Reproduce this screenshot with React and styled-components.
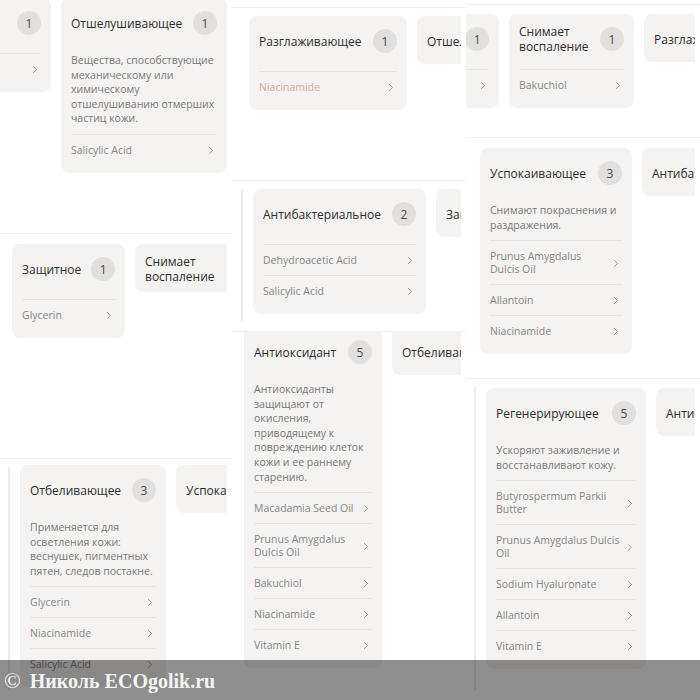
import React from "react";
import styled, { createGlobalStyle } from "styled-components";

const Global = createGlobalStyle`
  html, body { margin: 0; padding: 0; background: #fff; }
  body { font-family: "Open Sans", "Noto Sans", sans-serif; }
`;

const Page = styled.div`
  position: relative;
  width: 700px;
  height: 700px;
  overflow: hidden;
  display: flex;
  background: #fff;
`;

const Column = styled.div`
  flex: none;
  width: ${(p) => p.$w}px;
  padding-top: ${(p) => p.$top || 0}px;
  box-sizing: border-box;
  display: flex;
  flex-direction: column;
`;

const Tile = styled.div`
  flex: none;
  height: ${(p) => p.$h}px;
  box-sizing: border-box;
  border-top: ${(p) => (p.$line ? "1px solid #efefef" : "none")};
  display: flex;
  overflow: hidden;
`;

const Viewport = styled.div`
  flex: 1;
  margin-right: 5px;
  overflow: hidden;
  display: flex;
  align-items: flex-start;
`;

const Rail = styled.div`
  flex: none;
  align-self: stretch;
  width: 2px;
  margin: 8px 0 10px ${(p) => p.$ml}px;
  background: #ebebeb;
`;

const Row = styled.div`
  flex: none;
  width: max-content;
  display: flex;
  align-items: flex-start;
  gap: 10px;
  margin-top: ${(p) => p.$dy}px;
  margin-left: ${(p) => p.$dx}px;
`;

const Card = styled.div`
  flex: none;
  width: ${(p) => (p.$w ? `${p.$w}px` : "auto")};
  box-sizing: border-box;
  background: #f4f3f1;
  border-radius: 8px;
  padding: 0 10px ${(p) => (p.$open ? 8 : 11)}px;
`;

const Header = styled.div`
  display: flex;
  align-items: center;
  gap: ${(p) => (p.$open ? 10 : 18)}px;
  padding-top: 13px;
  height: 24px;
`;

const Title = styled.div`
  font-size: 12px;
  line-height: 15px;
  font-weight: 500;
  color: #2c2c2c;
  white-space: pre;
`;

const Badge = styled.div`
  flex: none;
  margin-left: auto;
  width: 24px;
  height: 24px;
  border-radius: 50%;
  background: #e1e0de;
  color: #4a4a4a;
  font-size: 12px;
  display: flex;
  align-items: center;
  justify-content: center;
`;

const Body = styled.div`
  padding-top: 18px;
`;

const Desc = styled.div`
  font-size: 10.5px;
  line-height: 14.6px;
  color: #787878;
  white-space: pre;
  padding-bottom: 8px;
`;

const Item = styled.div`
  display: flex;
  align-items: center;
  justify-content: space-between;
  gap: 8px;
  border-top: 1px solid #e5e4e2;
  padding: 9px 3px 8px 0;
`;

const ItemName = styled.div`
  font-size: 10.5px;
  line-height: 13px;
  color: ${(p) => (p.$accent ? "#e6a592" : "#868686")};
  white-space: pre;
`;

const Watermark = styled.div`
  position: absolute;
  left: 0;
  right: 0;
  bottom: 0;
  height: 40px;
  background: rgba(0, 0, 0, 0.44);
  display: flex;
  align-items: center;
  gap: 9px;
  padding: 2px 0 0 4px;
  box-sizing: border-box;
  font-family: "Liberation Serif", "DejaVu Serif", serif;
  font-weight: bold;
  font-size: 20px;
  color: #f4f4f4;
  white-space: pre;
`;

const Copy = styled.span`
  font-weight: normal;
  font-size: 22px;
`;

const Chevron = () => (
  <svg width="6" height="9" viewBox="0 0 6 9">
    <path d="M1.2 1.2 L4.6 4.5 L1.2 7.8" fill="none" stroke="#9c9c9c" strokeWidth="1" />
  </svg>
);

const CardView = ({ c }) => (
  <Card $w={c.w} $open={c.open}>
    <Header $open={c.open}>
      <Title>{c.title}</Title>
      <Badge>{c.n}</Badge>
    </Header>
    {c.open && (
      <Body>
        {c.desc && <Desc>{c.desc}</Desc>}
        {c.items.map((it, i) => (
          <Item key={i}>
            <ItemName $accent={c.accent === i}>{it}</ItemName>
            <Chevron />
          </Item>
        ))}
      </Body>
    )}
  </Card>
);

const C = {
  razg: { title: "Разглаживающее", n: 1, w: 158, items: ["Niacinamide"] },
  otsh: {
    title: "Отшелушивающее",
    n: 1,
    w: 166,
    desc: "Вещества, способствующие\nмеханическому или\nхимическому\nотшелушиванию отмерших\nчастиц кожи.",
    items: ["Salicylic Acid"],
  },
  zasch: { title: "Защитное", n: 1, w: 113, items: ["Glycerin"] },
  snim: { title: "Снимает\nвоспаление", n: 1, w: 125, items: ["Bakuchiol"] },
  otbel: {
    title: "Отбеливающее",
    n: 3,
    w: 146,
    desc: "Применяется для\nосветления кожи:\nвеснушек, пигментных\nпятен, следов постакне.",
    items: ["Glycerin", "Niacinamide", "Salicylic Acid"],
  },
  uspok: {
    title: "Успокаивающее",
    n: 3,
    w: 152,
    desc: "Снимают покраснения и\nраздражения.",
    items: ["Prunus Amygdalus\nDulcis Oil", "Allantoin", "Niacinamide"],
  },
  antib: {
    title: "Антибактериальное",
    n: 2,
    w: 173,
    items: ["Dehydroacetic Acid", "Salicylic Acid"],
  },
  antiox: {
    title: "Антиоксидант",
    n: 5,
    w: 138,
    desc: "Антиоксиданты\nзащищают от\nокисления,\nприводящему к\nповреждению клеток\nкожи и ее раннему\nстарению.",
    items: ["Macadamia Seed Oil", "Prunus Amygdalus\nDulcis Oil", "Bakuchiol", "Niacinamide", "Vitamin E"],
  },
  regen: {
    title: "Регенерирующее",
    n: 5,
    w: 160,
    desc: "Ускоряют заживление и\nвосстанавливают кожу.",
    items: [
      "Butyrospermum Parkii\nButter",
      "Prunus Amygdalus Dulcis\nOil",
      "Sodium Hyaluronate",
      "Allantoin",
      "Vitamin E",
    ],
  },
};

const open = (c, extra = {}) => ({ ...c, open: true, ...extra });
const shut = (c) => ({ ...c, w: undefined, open: false });

const columns = [
  {
    w: 232,
    top: 0,
    tiles: [
      { h: 233, line: false, dy: -2, dx: -115, cards: [open(C.razg, { w: 166 }), open(C.otsh)] },
      { h: 225, line: true, dy: 10, dx: 12, cards: [open(C.zasch), shut(C.snim)] },
      { h: 242, line: true, rail: 8, dy: 6, dx: 10, cards: [open(C.otbel), shut(C.uspok)] },
    ],
  },
  {
    w: 234,
    top: 7,
    tiles: [
      { h: 173, line: true, dy: 8, dx: 17, cards: [open(C.razg, { accent: 0 }), shut(C.otsh)] },
      { h: 151, line: true, rail: 9, dy: 8, dx: 10, cards: [open(C.antib), shut(C.zasch)] },
      { h: 369, line: true, dy: -5, dx: 12, cards: [open(C.antiox), shut(C.otbel)] },
    ],
  },
  {
    w: 234,
    top: 4,
    tiles: [
      { h: 133, line: true, dy: 9, dx: -80, cards: [open(C.zasch), open(C.snim), shut(C.razg)] },
      { h: 241, line: true, dy: 10, dx: 14, cards: [open(C.uspok), shut(C.antib)] },
      { h: 322, line: true, rail: 8, dy: 9, dx: 10, cards: [open(C.regen), shut(C.antib)] },
    ],
  },
];

export default function App() {
  return (
    <>
      <Global />
      <Page>
        {columns.map((col, ci) => (
          <Column key={ci} $w={col.w} $top={col.top}>
            {col.tiles.map((t, ti) => (
              <Tile key={ti} $h={t.h} $line={t.line}>
                <Viewport>
                  {t.rail && <Rail $ml={t.rail} />}
                  <Row $dy={t.dy} $dx={t.dx}>
                    {t.cards.map((c, k) => (
                      <CardView key={k} c={c} />
                    ))}
                  </Row>
                </Viewport>
              </Tile>
            ))}
          </Column>
        ))}
        <Watermark>
          <Copy>©</Copy>
          <span>Николь ECOgolik.ru</span>
        </Watermark>
      </Page>
    </>
  );
}
